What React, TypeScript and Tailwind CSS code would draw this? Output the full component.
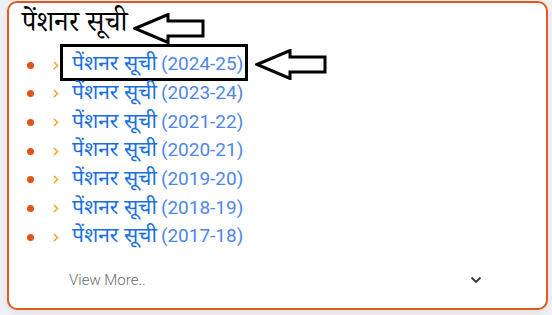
import React from "react";

function LeftArrow({ className }: { className?: string }) {
  return (
    <svg className={className} width="72" height="31" viewBox="0 0 72 31" fill="none">
      <polygon
        points="2,15.5 35,1.5 35,8 70,8 70,23 35,23 35,29.5"
        fill="white"
        stroke="black"
        strokeWidth="3"
        strokeLinejoin="miter"
      />
    </svg>
  );
}

const years = ["2024-25", "2023-24", "2021-22", "2020-21", "2019-20", "2018-19", "2017-18"];

export default function App() {
  return (
    <div className="min-h-screen w-[552px] h-[315px] bg-[#eef0f4] pt-[1px] pl-[7px]">
      <div className="w-[541px] h-[309px] rounded-[10px] border-2 border-[#e05a1e] bg-white shadow-[0_3px_6px_rgba(0,0,0,0.06)] flex flex-col">
        <div className="flex items-center pl-[13px] pt-[6px] h-[42px]">
          <span
            className="text-[28px] leading-none text-black"
            style={{ fontFamily: '"Noto Serif Devanagari", "Noto Sans Devanagari", "Noto Sans", serif' }}
          >
            पेंशनर सूची
          </span>
          <LeftArrow className="ml-[6px] w-[72px] h-[31px] shrink-0 mt-[3px]" />
        </div>
        <ul className="flex flex-col mt-[6px]">
          {years.map((y, i) => (
            <li key={y} className="flex items-center h-[28.67px] relative">
              <span className="ml-[18px] w-[7px] h-[7px] rounded-full bg-[#e0541a] shrink-0" />
              <svg className="ml-[19px] w-[6px] h-[9px] shrink-0" viewBox="0 0 6 9" fill="none">
                <path d="M1 1 L4.5 4.5 L1 8" stroke="#f5a623" strokeWidth="1.5" />
              </svg>
              <span className="ml-[13px] relative flex items-baseline whitespace-nowrap">
                <span
                  className="text-[21px] text-[#1a6fe0] leading-none"
                  style={{ fontFamily: '"Noto Sans Devanagari", "Noto Sans", sans-serif' }}
                >
                  पेंशनर सूची
                </span>
                <span
                  className="ml-[4px] text-[19px] text-[#4f86ea] leading-none"
                  style={{ fontFamily: 'Roboto, "Liberation Sans", sans-serif' }}
                >
                  ({y})
                </span>
                {i === 0 && (
                  <span className="absolute left-[-12px] right-[-5px] top-[-10px] bottom-[-5px] border-[3px] border-black pointer-events-none" />
                )}
              </span>
              {i === 0 && (
                <LeftArrow className="absolute left-[246px] top-[-2px] w-[72px] h-[31px]" />
              )}
            </li>
          ))}
        </ul>
        <div className="flex items-center justify-between mt-[17px] pl-[60px] pr-[64px]">
          <span
            className="text-[15px] font-light text-[#6b6b6b]"
            style={{ fontFamily: 'Roboto, "Liberation Sans", sans-serif' }}
          >
            View More..
          </span>
          <svg className="w-[12px] h-[8px]" viewBox="0 0 12 8" fill="none">
            <path d="M1.5 1.5 L6 6 L10.5 1.5" stroke="#333" strokeWidth="1.8" />
          </svg>
        </div>
      </div>
    </div>
  );
}
